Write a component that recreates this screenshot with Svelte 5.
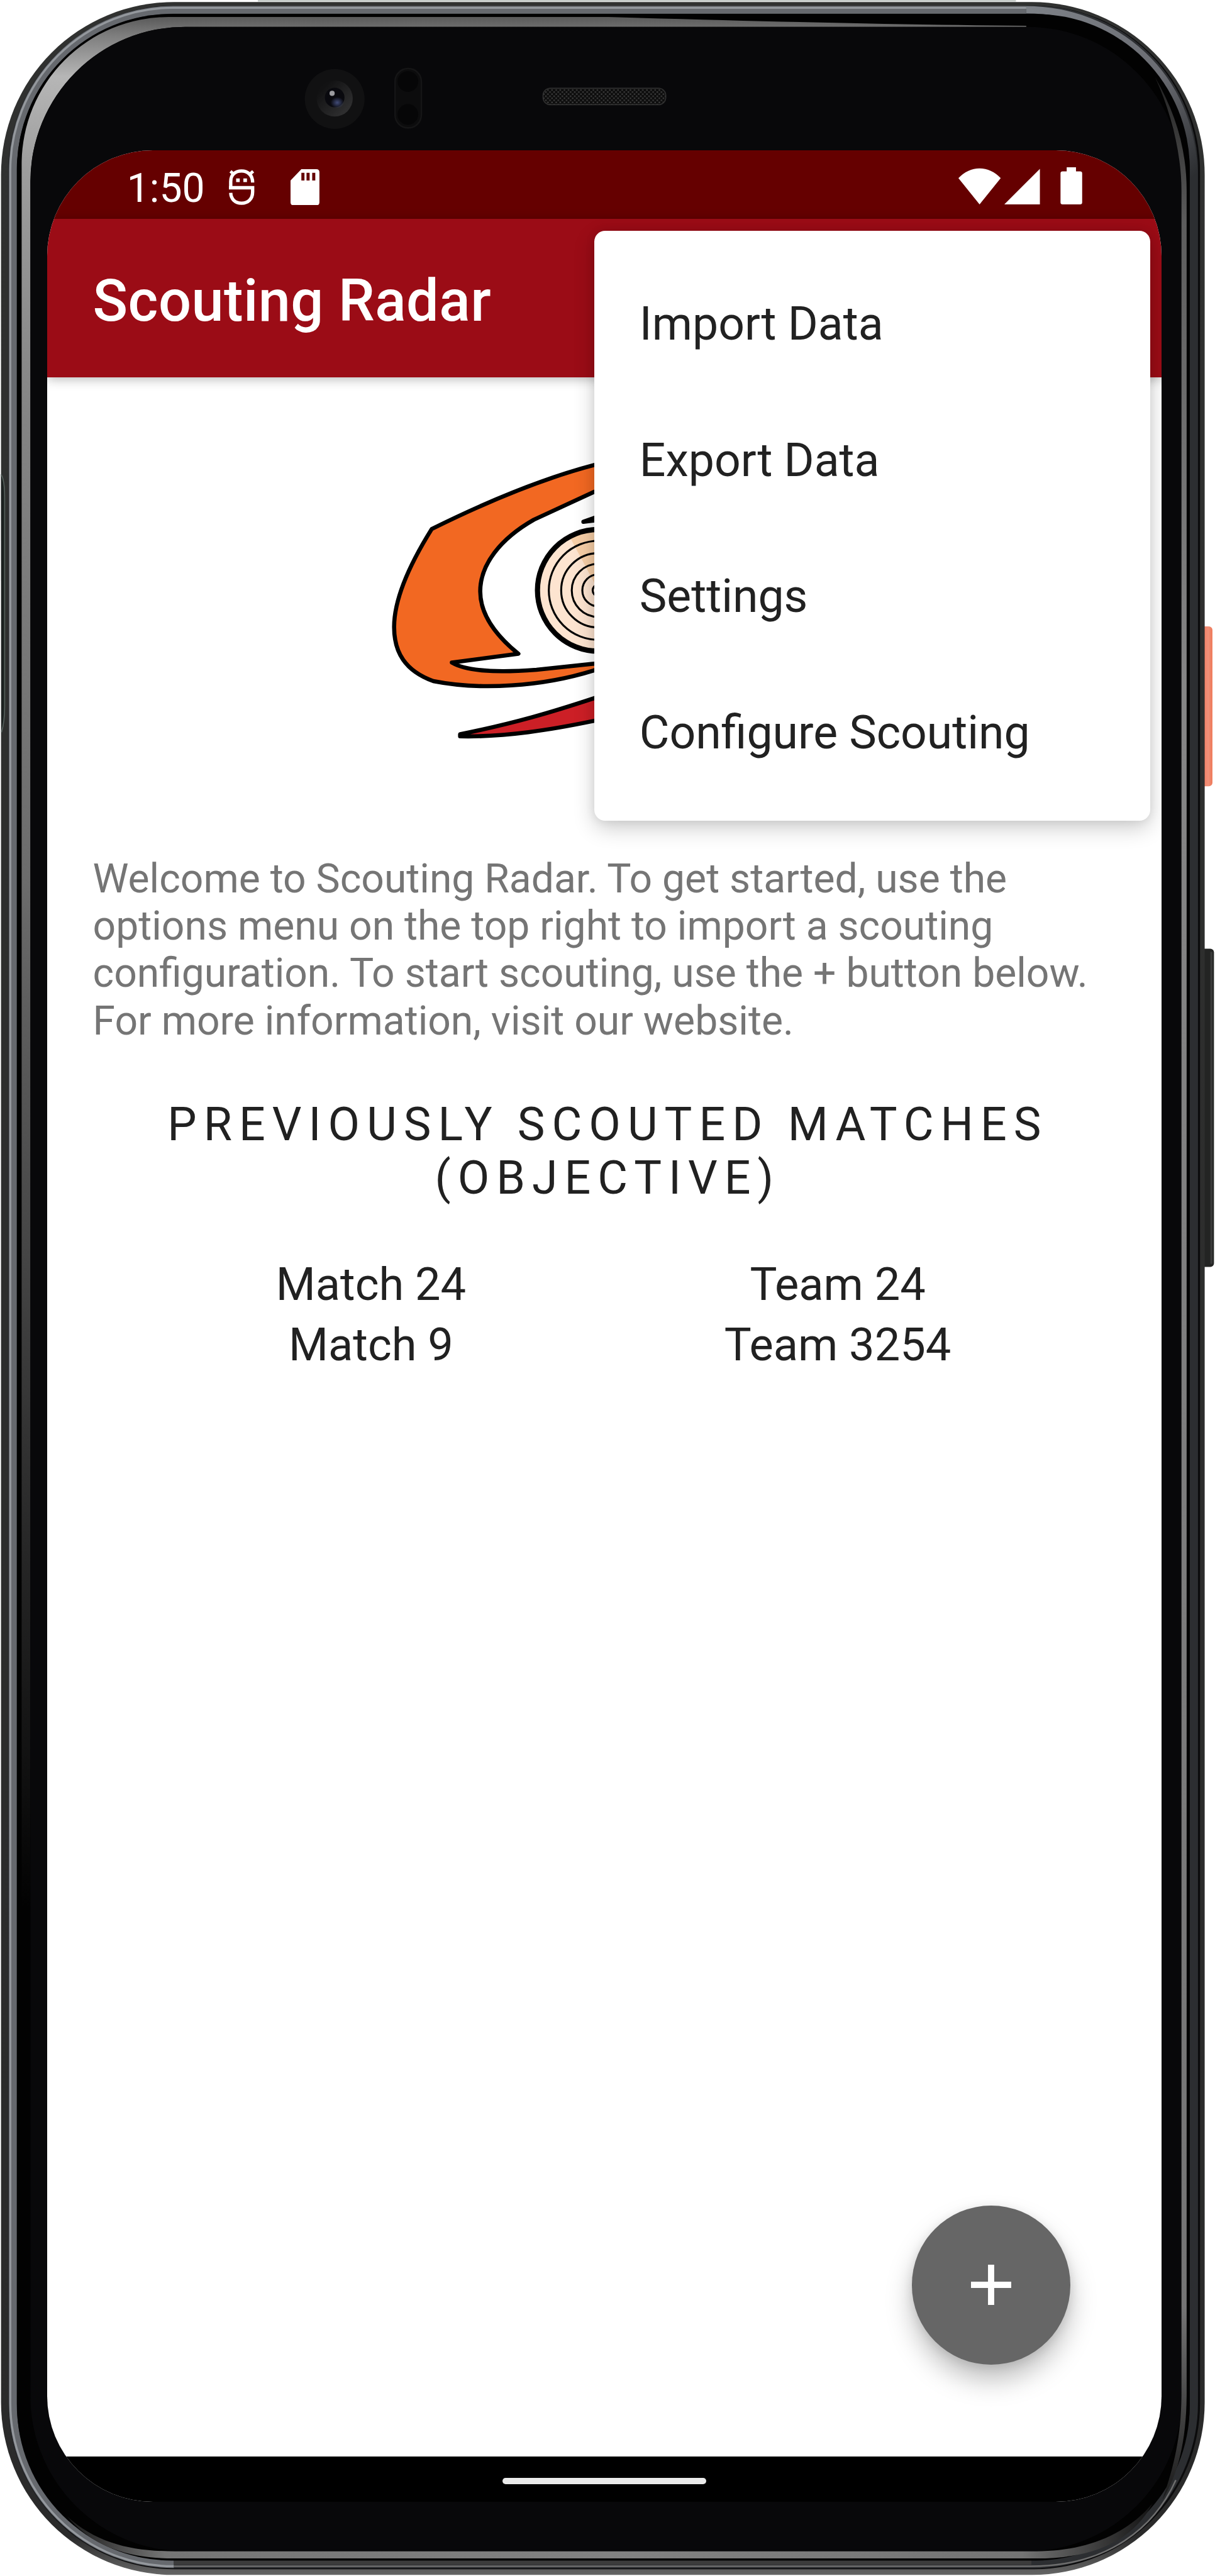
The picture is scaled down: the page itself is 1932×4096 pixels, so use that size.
<script>
  const menu = ['Import Data', 'Export Data', 'Settings', 'Configure Scouting'];
  const matches = [
    { match: 'Match 24', team: 'Team 24' },
    { match: 'Match 9', team: 'Team 3254' }
  ];
  // radii of the thin rings inside the eye
  const rings = [96, 72, 51.5, 31, 11];
</script>

<main class="stage">
  <svg class="device" viewBox="0 0 2356 4996" preserveAspectRatio="none" aria-hidden="true">
    <defs>
      <linearGradient id="shell" gradientUnits="userSpaceOnUse" x1="0" y1="0" x2="0" y2="4996">
        <stop offset="0" stop-color="#303130" />
        <stop offset=".985" stop-color="#2a2a2a" />
        <stop offset="1" stop-color="#686868" />
      </linearGradient>
      <linearGradient id="rimRight" gradientUnits="userSpaceOnUse" x1="1990" y1="19" x2="2316" y2="340">
        <stop offset="0" stop-color="#7d8187" />
        <stop offset=".6" stop-color="#6a6c72" />
        <stop offset="1" stop-color="#2c2e31" />
      </linearGradient>
      <linearGradient id="bevelL" gradientUnits="userSpaceOnUse" x1="0" y1="0" x2="0" y2="3700">
        <stop offset=".008" stop-color="#565656" />
        <stop offset=".018" stop-color="#7c7c7c" />
        <stop offset=".04" stop-color="#b6b6b6" />
        <stop offset=".09" stop-color="#9c9c9c" />
        <stop offset=".22" stop-color="#848484" />
        <stop offset=".46" stop-color="#6c6c6c" />
        <stop offset="1" stop-color="#020202" />
      </linearGradient>
      <linearGradient id="bevelR" gradientUnits="userSpaceOnUse" x1="0" y1="150" x2="0" y2="4850">
        <stop offset="0" stop-color="#222" />
        <stop offset=".06" stop-color="#5c5c5c" />
        <stop offset=".25" stop-color="#858585" />
        <stop offset=".92" stop-color="#747474" />
        <stop offset="1" stop-color="#1a1a1a" />
      </linearGradient>
      <linearGradient id="bevelB" x1="0" x2="1">
        <stop offset="0" stop-color="#1a1a1a" />
        <stop offset=".09" stop-color="#757575" />
        <stop offset=".5" stop-color="#828282" />
        <stop offset=".88" stop-color="#747474" />
        <stop offset="1" stop-color="#141414" />
      </linearGradient>
      <linearGradient id="power" x1="0" x2="1">
        <stop offset="0" stop-color="#d9583c" />
        <stop offset=".25" stop-color="#f57c61" />
        <stop offset=".7" stop-color="#f09079" />
        <stop offset="1" stop-color="#ee7655" />
      </linearGradient>
      <linearGradient id="lensRing" x1="0" y1="0" x2="1" y2="1">
        <stop offset=".2" stop-color="#121213" />
        <stop offset="1" stop-color="#363637" />
      </linearGradient>
      <radialGradient id="glow">
        <stop offset="0" stop-color="#424c78" />
        <stop offset="1" stop-color="#424c78" stop-opacity="0" />
      </radialGradient>
      <pattern id="mesh" width="8" height="8" patternUnits="userSpaceOnUse">
        <rect width="8" height="8" fill="#0d0d0d" />
        <path d="M1 1h3v3h-3zM5 5h3v3h-3z" fill="#3c3c3c" />
      </pattern>
    </defs>

    <!-- side keys -->
    <rect x="2325" y="1215" width="26" height="310" rx="7" fill="url(#power)" />
    <rect x="2325" y="1840" width="29" height="617" rx="7" fill="#232423" />
    <rect x="2347" y="1846" width="4" height="605" fill="#3b3b3b" />

    <!-- metal frame -->
    <path d="M500 1.500H1970" stroke="#c6cbc8" stroke-width="3" />
    <rect x="2" y="4" width="2334" height="4990" rx="335" fill="url(#shell)" />
    <rect x="16" y="11" width="2311" height="4972" rx="322" fill="#0b0b0c" />
    <rect x="24" y="19" width="2291" height="4954" rx="312" fill="none" stroke="#2c2e31" stroke-width="16" />
    <path d="M1990 19C2160 19 2315 145 2315 345" fill="none" stroke="url(#rimRight)" stroke-width="14" />
    <path d="M1990 19H336A311 311 0 0 0 25 330V4660A312 312 0 0 0 337 4973" fill="none" stroke="#66696e" stroke-width="15" />
    <path d="M1990 15H336A316 316 0 0 0 20 330V4660A316 316 0 0 0 337 4977" fill="none" stroke="#94989d" stroke-width="4" />
    <path d="M337 4970H2000" stroke="#3c3c3c" stroke-width="9" />
    <path d="M337 4977H2000C2150 4977 2240 4900 2280 4810" fill="none" stroke="#6e6e6e" stroke-width="3" />
    <rect x="33" y="27" width="2274" height="4939" rx="300" fill="#020202" />

    <!-- bevel round the glass -->
    <path d="M42 3700V318A285 285 0 0 1 327 33H1180Q1700 48 1990 50V52H359A300 300 0 0 0 59 352V3700Z" fill="url(#bevelL)" />
    <rect x="59" y="52" width="2233" height="4896" rx="300" fill="#08080a" />
    <path d="M2240 150C2280 220 2301 290 2301 370V4640C2301 4730 2285 4800 2254 4848C2278 4780 2291 4720 2291 4640V370C2291 300 2272 220 2240 150Z" fill="url(#bevelR)" />
    <path d="M130 4880C190 4935 260 4948 340 4948H2010C2100 4948 2180 4920 2235 4855C2190 4940 2100 4962 2010 4962H340C250 4962 180 4940 130 4880Z" fill="url(#bevelB)" />

    <!-- SIM tray on the left edge -->
    <path d="M2 920Q9 930 9 965V1370Q9 1400 3 1420" fill="#1c2120" stroke="#56605c" stroke-width="2" />

    <!-- camera, sensor and speaker -->
    <circle cx="649" cy="192" r="58" fill="#111112" />
    <circle cx="649" cy="191" r="35" fill="url(#lensRing)" />
    <circle cx="649" cy="189" r="19" fill="#09090e" />
    <ellipse cx="654" cy="199" rx="13" ry="11" fill="url(#glow)" />
    <circle cx="644" cy="181" r="5" fill="#9c9ca0" />
    <rect x="766" y="133" width="51" height="115" rx="25" fill="#0c0c0d" stroke="#151516" stroke-width="3" />
    <circle cx="791" cy="158" r="20" fill="#060607" />
    <circle cx="791" cy="222" r="20" fill="#060607" />
    <rect x="1053" y="171" width="238" height="32" rx="14" fill="url(#mesh)" stroke="#303030" stroke-width="2" />
  </svg>

  <section class="screen">
    <header class="status">
      <div class="status-left">
        <span class="clock">1:50</span>
        <svg class="robot" viewBox="0 0 50 70" fill="none" stroke="#fff" stroke-width="6.500">
          <path d="M3.500 36V24C3.500 10 13 3.500 24.500 3.500S46 11 46 26M0 36H46V44C46 58 37 66 24.500 66S4 58 3.500 46" />
          <path d="M3 4L11 11M47 4L39 11" stroke-width="6" />
          <path d="M14 21.500h7M28 21.500h7" stroke-width="7" />
        </svg>
        <svg class="card" viewBox="0 0 56 70">
          <path fill="#fff" fill-rule="evenodd" d="M21 0H50Q56 0 56 6V64Q56 70 50 70H6Q0 70 0 64V22ZM21 7V22H27V7ZM31 7V22H37V7ZM42 7V22H48V7Z" />
        </svg>
      </div>
      <svg class="signals" viewBox="0 0 242 74" fill="#fff">
        <path d="M0 21Q18 2 41 2T82 21L41 72Z" />
        <path d="M89 72L158 3V72Z" />
        <path d="M210 0H228V8H236Q240 8 240 12V68Q240 72 236 72H202Q198 72 198 68V12Q198 8 202 8H210Z" />
      </svg>
    </header>

    <div class="appbar"><h1>Scouting Radar</h1></div>

    <div class="content">
      <svg class="logo" viewBox="740 860 660 600" stroke="#000" stroke-width="8" stroke-linejoin="round">
        <path fill="#f26822" d="M837 1026C940 975 1045 930 1152 902L1300 870V900L1152 954L1035 1008C970 1045 931 1095 931 1147C931 1190 958 1230 1005 1268L876 1285C905 1302 960 1305 1040 1299L1152 1287L1300 1265L1152 1300C1050 1332 930 1339 840 1321C785 1301 764 1265 764 1216C764 1160 797 1090 837 1026Z" />
        <path fill="#cc1f26" d="M892 1424C1000 1402 1070 1381 1152 1354L1300 1300V1360L1152 1398C1070 1415 980 1430 892 1428Z" />
        <path d="M1131 1012L1165 1000V1008Z" />
        <circle cx="1160" cy="1145" r="118" fill="#fde4d0" stroke="none" />
        <path fill="#f6cea6" stroke="none" d="M1105 1042L1160 1145H1278A118 118 0 0 0 1105 1042Z" />
        <circle cx="1160" cy="1145" r="118" fill="none" stroke-width="10" />
        {#each rings as r}
          <circle cx="1160" cy="1145" {r} fill="none" stroke-width="3.800" />
        {/each}
      </svg>

      <p class="intro">
        Welcome to Scouting Radar. To get started, use the<br />
        options menu on the top right to import a scouting<br />
        configuration. To start scouting, use the + button below.<br />
        For more information, visit our website.
      </p>

      <h2>PREVIOUSLY SCOUTED MATCHES<br />(OBJECTIVE)</h2>

      <div class="matches">
        {#each matches as row}
          <span>{row.match}</span>
          <span>{row.team}</span>
        {/each}
      </div>
    </div>

    <footer class="nav"><span class="handle"></span></footer>

    <button class="fab" aria-label="Add">
      <svg viewBox="0 0 78 78" fill="#fff"><path d="M33 0H45V33H78V45H45V78H33V45H0V33H33Z" /></svg>
    </button>

    <ul class="menu">
      {#each menu as item}<li>{item}</li>{/each}
    </ul>
  </section>
</main>

<style>
  /* 1rem equals 100 units of the device drawing */
  :global(html) { font-size: 82px; }
  :global(body) { margin: 0; background: #fff; }
  .stage {
    position: relative;
    box-sizing: border-box;
    width: 1932px;
    height: 4096px;
    padding: 2.92rem 1.04rem 0 0.92rem;
    overflow: hidden;
    font-family: Roboto, sans-serif;
    color: #212121;
  }
  .device { position: absolute; left: 0; top: 0; width: 100%; height: 100%; }
  .screen {
    position: relative;
    display: flex;
    flex-direction: column;
    width: 21.6rem;
    height: 45.59rem;
    border-radius: 2.05rem;
    overflow: hidden;
    background: #fff;
  }
  .status {
    display: flex;
    box-sizing: border-box;
    justify-content: space-between;
    height: 1.32rem;
    padding: 0 1.52rem 0 1.54rem;
    background: #650000;
  }
  .status-left { display: flex; align-items: center; }
  .clock { width: 1.98rem; padding-top: 0.15rem; font-size: 0.784rem; line-height: 1.4rem; color: #fff; }
  .robot { width: 0.5rem; height: 0.7rem; margin-top: 0.1rem; }
  .card { width: 0.56rem; height: 0.7rem; margin: 0.1rem 0 0 0.69rem; }
  .signals { width: 2.42rem; height: 0.74rem; margin-top: 0.32rem; }
  .appbar {
    display: flex;
    align-items: center;
    position: relative;
    height: 3.08rem;
    padding-left: 0.88rem;
    background: #9b0c16;
    box-shadow: 0 0.04rem 0.2rem rgba(0, 0, 0, 0.28);
  }
  h1 { margin: 0.11rem 0 0; font-size: 1.12rem; font-weight: 500; letter-spacing: 0.005rem; color: #fff; }
  .content { flex: 1; display: flex; flex-direction: column; padding: 1.28rem 0.88rem 0; }
  .logo { width: 6.6rem; height: 6rem; margin-left: 5.6rem; }
  .intro { margin: 1.98rem 0 0; font-size: 0.783rem; line-height: 0.92rem; color: #757575; white-space: nowrap; }
  h2 { margin: 1.03rem 0 0; padding-left: 0.13rem; font-size: 0.896rem; font-weight: 400; line-height: 1.04rem; letter-spacing: 0.1344rem; text-align: center; white-space: nowrap; }
  .matches { display: grid; grid-template-columns: 1fr 1fr; margin: 0.96rem 0.87rem 0; font-size: 0.88rem; line-height: 1.17rem; text-align: center; }
  .nav { display: flex; justify-content: center; height: 0.88rem; background: #000; }
  .handle { width: 3.96rem; height: 0.12rem; margin-top: 0.42rem; border-radius: 0.06rem; background: #ebebeb; }
  .fab {
    position: absolute;
    right: 1.76rem;
    bottom: 2.66rem;
    display: flex;
    align-items: center;
    justify-content: center;
    width: 3.08rem;
    height: 3.08rem;
    padding: 0;
    border: 0;
    border-radius: 50%;
    background: #666;
    box-shadow: 0 0.3rem 0.5rem rgba(0, 0, 0, 0.25), 0 0.05rem 0.2rem rgba(0, 0, 0, 0.1);
  }
  .fab svg { width: 0.78rem; height: 0.78rem; }
  .menu {
    position: absolute;
    right: 0.22rem;
    top: 1.56rem;
    box-sizing: border-box;
    width: 10.78rem;
    height: 11.44rem;
    margin: 0;
    padding: 0.44rem 0 0.44rem 0.88rem;
    list-style: none;
    border-radius: 0.21rem;
    background: #fff;
    box-shadow: 0 0.14rem 0.42rem rgba(0, 0, 0, 0.2), 0 0 0.2rem rgba(0, 0, 0, 0.08);
  }
  .menu li { height: 2.64rem; font-size: 0.894rem; line-height: 2.74rem; }
</style>
